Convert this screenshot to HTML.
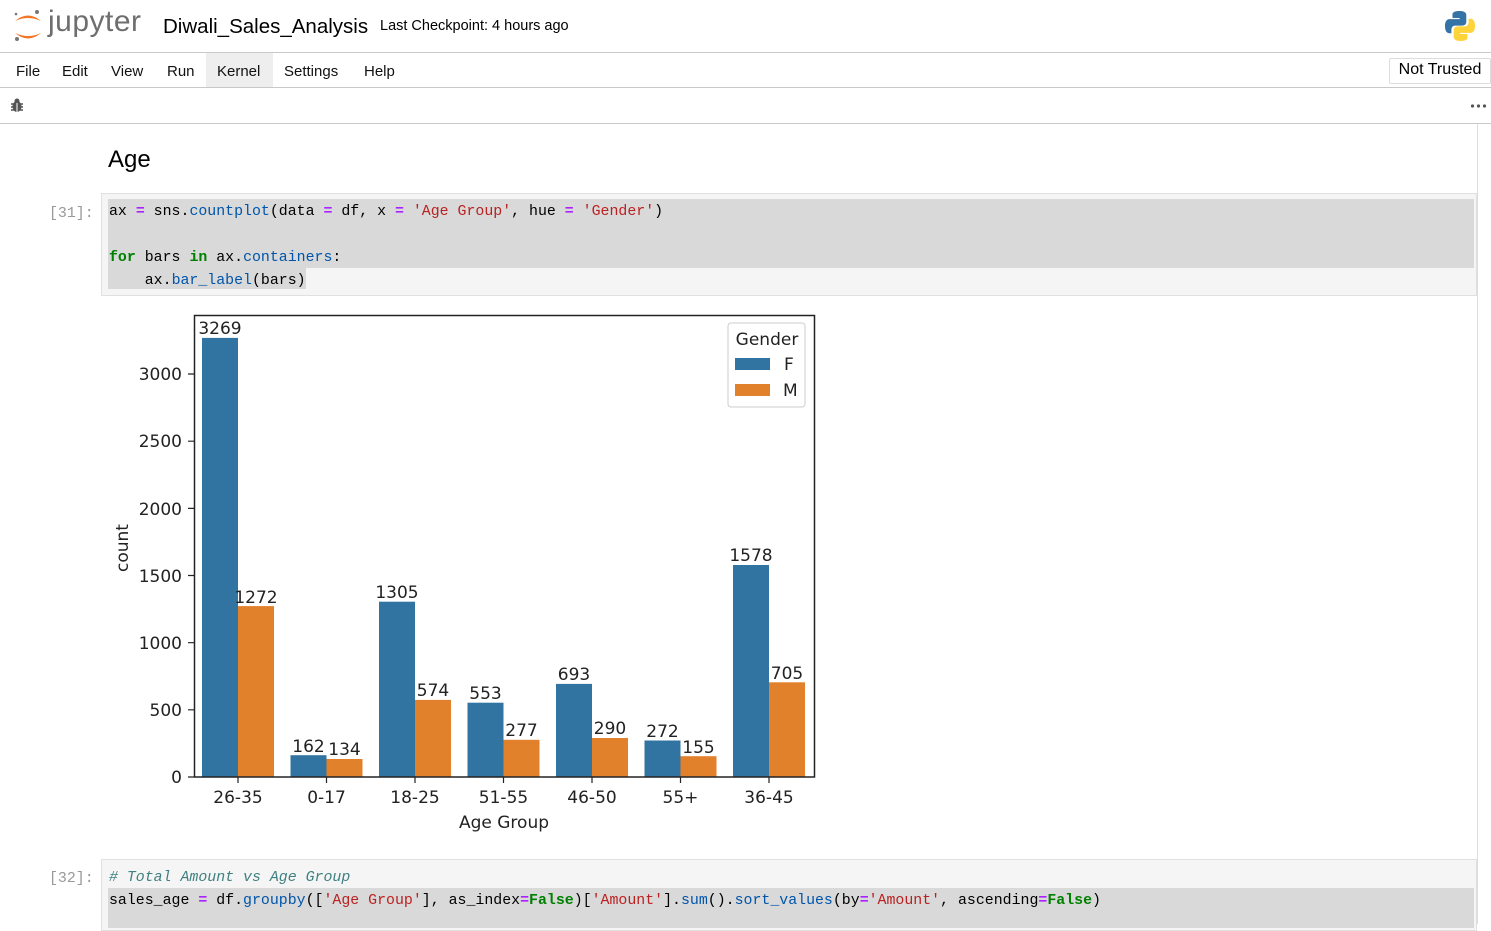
<!DOCTYPE html>
<html><head><meta charset="utf-8"><style>
body{margin:0;width:1491px;height:924px;overflow:hidden;background:#fff;font-family:"Liberation Sans",sans-serif;position:relative}
.abs{position:absolute}
.code{font-family:"Liberation Mono",monospace;font-size:14.9px;color:#000;white-space:pre;line-height:23px}
.kw{color:#008000;font-weight:bold}.op{color:#aa22ff;font-weight:bold}.fn{color:#0055aa}.st{color:#ba2121}.cm{color:#408080;font-style:italic}
.menu span{position:absolute;top:63px;font-size:15px;color:#111}
</style></head><body>
<!-- header -->
<svg class="abs" style="left:12px;top:8px" width="32" height="36" viewBox="0 0 32 36">
<path d="M3 13 Q16 2 29 13 Q16 7 3 13Z" fill="#f37726"/>
<path d="M3 25 Q16 36 29 25 Q16 31 3 25Z" fill="#f37726"/>
<circle cx="25" cy="4" r="2" fill="#767677"/><circle cx="5" cy="31" r="2" fill="#767677"/><circle cx="4" cy="6" r="1.3" fill="#767677"/>
</svg>
<div class="abs" style="left:48px;top:5px;font-size:30px;color:#6e6e6e;letter-spacing:0.5px">jupyter</div>
<div class="abs" style="left:163px;top:15px;font-size:20.5px;color:#000">Diwali_Sales_Analysis</div>
<div class="abs" style="left:380px;top:18px;font-size:14.5px;color:#000">Last Checkpoint: 4 hours ago</div>
<svg class="abs" style="left:1444px;top:10px" width="32" height="32" viewBox="0 0 32 32">
<path d="M15.5 1C8 1 8.5 4.3 8.5 4.3V8h7.2v1.1H5.6S1 8.6 1 16s4 7.2 4 7.2h2.4v-3.5s-.1-4.1 4-4.1h7s3.9.1 3.9-3.8V5.1S22.9 1 15.5 1z" fill="#3572a5"/>
<path d="M16.5 31c7.5 0 7-3.3 7-3.3V24h-7.2v-1.1h10.1S31 23.4 31 16s-4-7.2-4-7.2h-2.4v3.5s.1 4.1-4 4.1h-7s-3.9-.1-3.9 3.8v6.7S9.1 31 16.5 31z" fill="#ffd43b"/>
</svg>
<div class="abs" style="left:0;top:52px;width:1491px;height:1px;background:#c8c8c8"></div>
<div class="abs" style="left:206px;top:53px;width:67px;height:34px;background:#eeeeee"></div>
<div class="menu"><span style="left:16px">File</span><span style="left:62px">Edit</span><span style="left:111px">View</span><span style="left:167px">Run</span><span style="left:217px">Kernel</span><span style="left:284px">Settings</span><span style="left:364px">Help</span></div>
<div class="abs" style="left:1389px;top:58px;width:100px;height:24px;border:1px solid #ddd;border-radius:2px;font-size:16px;line-height:22px;text-align:center;color:#000">Not Trusted</div>
<div class="abs" style="left:0;top:87px;width:1491px;height:1px;background:#c8c8c8"></div>
<svg class="abs" style="left:10px;top:98px" width="14" height="15" viewBox="0 0 14 15"><ellipse cx="7" cy="8.5" rx="4.5" ry="5.5" fill="#555"/><circle cx="7" cy="3" r="2.5" fill="#555"/><path d="M1 6h12M1 9h12M1 12h12" stroke="#555" stroke-width="1.5"/><path d="M7 5v9" stroke="#fff" stroke-width="1"/></svg>
<svg class="abs" style="left:1470px;top:103px" width="18" height="6"><circle cx="2.5" cy="3" r="1.6" fill="#555"/><circle cx="8.5" cy="3" r="1.6" fill="#555"/><circle cx="14.5" cy="3" r="1.6" fill="#555"/></svg>
<div class="abs" style="left:0;top:123px;width:1491px;height:1px;background:#c8c8c8"></div>
<div class="abs" style="left:1477px;top:124px;width:1px;height:800px;background:#ddd"></div>
<!-- content -->
<div class="abs" style="left:108px;top:146px;font-size:24px;color:#000">Age</div>
<div class="abs code" style="left:49px;top:203px;color:#999">[31]:</div>
<div class="abs" style="left:101px;top:193px;width:1374px;height:101px;background:#f5f5f5;border:1px solid #e0e0e0"></div>
<div class="abs" style="left:108px;top:199px;width:1366px;height:69px;background:#d9d9d9"></div>
<div class="abs" style="left:108px;top:268px;width:198px;height:21px;background:#d9d9d9"></div>
<div class="abs code" style="left:109px;top:201px">ax <span class="op">=</span> sns.<span class="fn">countplot</span>(data <span class="op">=</span> df, x <span class="op">=</span> <span class="st">'Age Group'</span>, hue <span class="op">=</span> <span class="st">'Gender'</span>)

<span class="kw">for</span> bars <span class="kw">in</span> ax.<span class="fn">containers</span>:
    ax.<span class="fn">bar_label</span>(bars)</div>
<!-- chart -->
<svg class="abs" style="left:0;top:300px" width="830" height="540" viewBox="0 300 830 540" font-family="DejaVu Sans,sans-serif" font-size="17">
<g fill="#3274a1">
<rect x="202" y="337.9" width="36" height="439.1"/><rect x="290.5" y="755.2" width="36" height="21.8"/><rect x="379" y="601.7" width="36" height="175.3"/><rect x="467.5" y="702.7" width="36" height="74.3"/><rect x="556" y="683.9" width="36" height="93.1"/><rect x="644.5" y="740.5" width="36" height="36.5"/><rect x="733" y="565" width="36" height="212"/>
</g>
<g fill="#e1812c">
<rect x="238" y="606.1" width="36" height="170.9"/><rect x="326.5" y="759" width="36" height="18"/><rect x="415" y="699.9" width="36" height="77.1"/><rect x="503.5" y="739.8" width="36" height="37.2"/><rect x="592" y="738" width="36" height="39"/><rect x="680.5" y="756.2" width="36" height="20.8"/><rect x="769" y="682.3" width="36" height="94.7"/>
</g>
<rect x="194.5" y="315.5" width="620" height="461.5" fill="none" stroke="#222" stroke-width="1.5"/>
<g text-anchor="middle" fill="#222">
<text x="220" y="334">3269</text><text x="256" y="603">1272</text>
<text x="308.5" y="752">162</text><text x="344.5" y="755">134</text>
<text x="397" y="598">1305</text><text x="433" y="696">574</text>
<text x="485.5" y="699">553</text><text x="521.5" y="736">277</text>
<text x="574" y="680">693</text><text x="610" y="734">290</text>
<text x="662.5" y="737">272</text><text x="698.5" y="753">155</text>
<text x="751" y="561">1578</text><text x="787" y="679">705</text>
<text x="238" y="803">26-35</text><text x="326.5" y="803">0-17</text><text x="415" y="803">18-25</text><text x="503.5" y="803">51-55</text><text x="592" y="803">46-50</text><text x="680.5" y="803">55+</text><text x="769" y="803">36-45</text>
<text x="504" y="828">Age Group</text>
</g>
<g text-anchor="end" fill="#222">
<text x="182" y="783">0</text><text x="182" y="716">500</text><text x="182" y="649">1000</text><text x="182" y="582">1500</text><text x="182" y="515">2000</text><text x="182" y="447">2500</text><text x="182" y="380">3000</text>
</g>
<g stroke="#222" stroke-width="1.2">
<path d="M188 777h6M188 709.8h6M188 642.7h6M188 575.5h6M188 508.4h6M188 441.2h6M188 374h6"/>
<path d="M238 777v6M326.5 777v6M415 777v6M503.5 777v6M592 777v6M680.5 777v6M769 777v6"/>
</g>
<text x="128" y="548" transform="rotate(-90 128 548)" text-anchor="middle" fill="#222">count</text>
<rect x="728" y="323" width="77" height="84" rx="3" fill="#fff" fill-opacity="0.85" stroke="#ccc"/>
<text x="767" y="345" text-anchor="middle" fill="#222">Gender</text>
<rect x="735" y="358" width="35" height="12" fill="#3274a1"/><text x="784" y="370" fill="#222">F</text>
<rect x="735" y="384" width="35" height="12" fill="#e1812c"/><text x="783" y="396" fill="#222">M</text>
</svg>
<!-- cell 32 -->
<div class="abs code" style="left:49px;top:868px;color:#999">[32]:</div>
<div class="abs" style="left:101px;top:859px;width:1374px;height:70px;background:#f5f5f5;border:1px solid #e0e0e0"></div>
<div class="abs" style="left:108px;top:888px;width:1366px;height:40px;background:#d9d9d9"></div>
<div class="abs code" style="left:109px;top:867px"><span class="cm"># Total Amount vs Age Group</span>
sales_age <span class="op">=</span> df.<span class="fn">groupby</span>([<span class="st">'Age Group'</span>], as_index<span class="op">=</span><span class="kw">False</span>)[<span class="st">'Amount'</span>].<span class="fn">sum</span>().<span class="fn">sort_values</span>(by<span class="op">=</span><span class="st">'Amount'</span>, ascending<span class="op">=</span><span class="kw">False</span>)</div>
</body></html>
